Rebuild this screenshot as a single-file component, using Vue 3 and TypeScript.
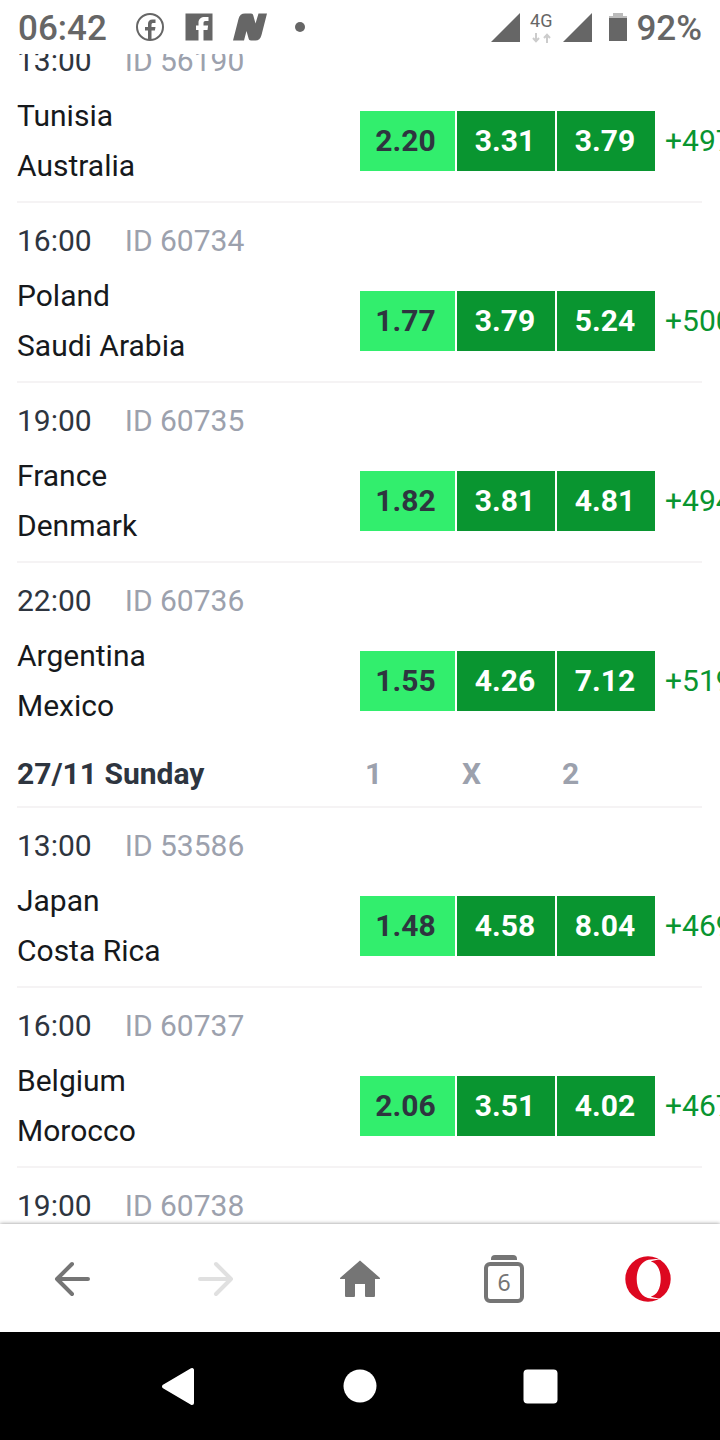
<script setup lang="ts">
import { onMounted, ref } from 'vue'

interface Match {
  time: string
  id: string
  teams?: string[]
  odds?: string[]
  more?: string
}

interface Day {
  title?: string
  matches: Match[]
}

const outcomes = ['1', 'X', '2']

const days: Day[] = [
  {
    matches: [
      { time: '13:00', id: '56190', teams: ['Tunisia', 'Australia'], odds: ['2.20', '3.31', '3.79'], more: '+497' },
      { time: '16:00', id: '60734', teams: ['Poland', 'Saudi Arabia'], odds: ['1.77', '3.79', '5.24'], more: '+500' },
      { time: '19:00', id: '60735', teams: ['France', 'Denmark'], odds: ['1.82', '3.81', '4.81'], more: '+494' },
      { time: '22:00', id: '60736', teams: ['Argentina', 'Mexico'], odds: ['1.55', '4.26', '7.12'], more: '+519' },
    ],
  },
  {
    title: '27/11 Sunday',
    matches: [
      { time: '13:00', id: '53586', teams: ['Japan', 'Costa Rica'], odds: ['1.48', '4.58', '8.04'], more: '+469' },
      { time: '16:00', id: '60737', teams: ['Belgium', 'Morocco'], odds: ['2.06', '3.51', '4.02'], more: '+467' },
      { time: '19:00', id: '60738' },
    ],
  },
]

const list = ref<HTMLElement | null>(null)

onMounted(() => {
  if (list.value) list.value.scrollTop = 31
})
</script>

<template>
  <div class="screen">
    <header class="status">
      <span class="clock">06:42</span>
      <div class="notices">
        <svg width="30" height="30" viewBox="0 0 30 30" aria-hidden="true">
          <circle cx="15" cy="15" r="13" fill="none" stroke="#666" stroke-width="2" />
          <path fill="#666" d="M13 28V18.500H10V15h3v-3C13 9 14.500 7.500 17.500 7.500H20.500v3.500h-2.200c-1.300 0-1.800.6-1.800 1.800V15H20.500l-.6 3.500h-3.400V28z" />
        </svg>
        <svg width="28" height="28" viewBox="0 0 28 28" aria-hidden="true">
          <path fill="#666" fill-rule="evenodd" d="M.5.5h27v27H18.500V17H22.500l.6-4.500H18.500V10c0-1.300.6-2 2-2H23.500V4H20C16 4 13.500 6 13.500 9.500v3H11V17h2.500v10.500H.5z" />
        </svg>
        <svg width="34" height="28" viewBox="0 0 34 28" aria-hidden="true">
          <path fill="#666" d="M0 27.500 5.500 6C6.500 2.300 8.500.5 12 .5h6c1.500 0 2 .8 2.300 2l2.200 8L25.500.5H34L28.500 22c-1 3.700-3 5.500-6 5.500h-4.500c-1.500 0-2.100-.8-2.400-2L13.500 18l-2.500 9.500z" />
        </svg>
        <i class="dot"></i>
      </div>
      <div class="signals">
        <svg width="29" height="29" viewBox="0 0 29 29" aria-hidden="true"><path fill="#666" d="M29 0v29H0z" /></svg>
        <div class="network">
          <span>4G</span>
          <svg width="20" height="10" viewBox="0 0 20 10" aria-hidden="true">
            <path fill="none" stroke="#ccc" stroke-width="2" d="M5 0v8M2 5l3 3.200L8 5M16 10V2M13 5l3-3.200L19 5" />
          </svg>
        </div>
        <svg width="29" height="29" viewBox="0 0 29 29" aria-hidden="true"><path fill="#666" d="M29 0v29H0z" /></svg>
        <svg class="battery" width="18" height="29" viewBox="0 0 18 29" aria-hidden="true">
          <path fill="#bbb" d="M4 0h10v3h4v3H0V3h4z" />
          <path fill="#666" d="M0 5h18v23H0z" />
        </svg>
        <span class="percent">92%</span>
      </div>
    </header>

    <main ref="list" class="list">
      <section v-for="(day, d) in days" :key="d">
        <h2 v-if="day.title" class="day">
          <span>{{ day.title }}</span>
          <span class="outcomes"><span v-for="o in outcomes" :key="o">{{ o }}</span></span>
        </h2>
        <article v-for="m in day.matches" :key="m.id" class="match">
          <div class="meta"><time>{{ m.time }}</time><span class="id">ID {{ m.id }}</span></div>
          <div v-if="m.teams" class="body">
            <div class="teams"><div v-for="t in m.teams" :key="t">{{ t }}</div></div>
            <div class="odds">
              <button v-for="(o, i) in m.odds" :key="i" type="button">{{ o }}</button>
              <a class="more" href="#">{{ m.more }}</a>
            </div>
          </div>
        </article>
      </section>
    </main>

    <nav class="toolbar" aria-label="Browser">
      <button type="button" aria-label="Back">
        <svg width="48" height="48" viewBox="0 0 48 48"><path class="arrow" stroke="#757575" d="M40 24H9M24 9 9 24l15 15" /></svg>
      </button>
      <button type="button" aria-label="Forward" disabled>
        <svg width="48" height="48" viewBox="0 0 48 48"><path class="arrow" stroke="#e0e0e0" d="M8 24h31M24 9l15 15-15 15" /></svg>
      </button>
      <button type="button" aria-label="Home">
        <svg width="48" height="48" viewBox="0 0 48 48"><path fill="#757575" d="M24 5.500 43.500 22.500c.9.900.6 1.500-.5 1.500H39v16.500c0 1-.5 1.500-1.500 1.500h-7c-1 0-1.500-.5-1.500-1.500V29H19v11.500c0 1-.5 1.500-1.500 1.500h-7C9.500 42 9 41.500 9 40.500V24H5c-1.100 0-1.400-.6-.5-1.500z" /></svg>
      </button>
      <button type="button" class="tabs" aria-label="Tabs">
        <i class="tab-lid"></i>
        <span class="tab-count">6</span>
      </button>
      <button type="button" aria-label="Opera menu">
        <svg width="48" height="48" viewBox="0 0 48 48">
          <circle cx="24" cy="24" r="22.700" fill="#dd0820" />
          <path fill="#fff" d="M38 4.800C34.500 3.800 30.500 3.800 27 4.500 18 5 12.700 13.500 12.700 24S18 43 27 43.500c3.500.7 7.500.7 11-.3-4 .2-8-.2-11.300-1.700C33 40.500 36.700 33 36.700 24S33 7.500 26.700 6.500C30 5 34 4.600 38 4.800z" />
        </svg>
      </button>
    </nav>

    <nav class="system" aria-label="System">
      <button type="button" aria-label="System back">
        <svg width="48" height="48" viewBox="0 0 48 48"><path fill="#fff" stroke="#fff" stroke-width="4" stroke-linejoin="round" d="M36 8v33L8 24.500z" /></svg>
      </button>
      <button type="button" aria-label="System home">
        <svg width="48" height="48" viewBox="0 0 48 48"><circle cx="24" cy="24" r="16.500" fill="#fff" /></svg>
      </button>
      <button type="button" aria-label="Recent apps">
        <svg width="48" height="48" viewBox="0 0 48 48"><rect x="7.500" y="7.500" width="34" height="34" rx="4" fill="#fff" /></svg>
      </button>
    </nav>
  </div>
</template>

<style>
body {
  margin: 0;
}
</style>

<style scoped>
.screen {
  display: flex;
  flex-direction: column;
  height: 100vh;
  overflow: hidden;
  background: #fff;
  font-family: Roboto, "Liberation Sans", sans-serif;
  font-size: 30px;
  color: #16191c;
}

.screen svg {
  display: block;
  flex: none;
}

button {
  padding: 0;
  border: 0;
  background: none;
  font: inherit;
  color: inherit;
}

.status {
  display: flex;
  flex: none;
  align-items: center;
  height: 54px;
  padding: 0 18px;
  line-height: 36px;
  color: #666;
}

.clock,
.percent {
  padding-top: 4px;
  font-size: 35px;
  font-weight: 500;
}

.notices {
  display: flex;
  align-items: center;
  gap: 20px;
  margin-left: 28px;
}

.dot {
  width: 10px;
  height: 10px;
  margin-left: 8px;
  border-radius: 50%;
  background: #666;
}

.signals {
  display: flex;
  align-items: center;
  margin-left: auto;
}

.network {
  display: flex;
  flex-direction: column;
  align-items: center;
  gap: 4px;
  margin: 2px 11px 0 10px;
  font-size: 18px;
  line-height: 16px;
}

.battery {
  margin: 0 9px 0 17px;
}

.list {
  flex: 1;
  min-height: 0;
  overflow-x: hidden;
  overflow-y: auto;
  padding: 0 18px 0 17px;
  scrollbar-width: none;
}

.match {
  box-sizing: border-box;
  min-height: 178px;
  padding: 13px 0 10px;
  border-bottom: 2px solid #f5f3f4;
  line-height: 50px;
}

.match:last-child {
  border-bottom: 0;
}

.meta {
  display: flex;
  gap: 33px;
  color: #2e353f;
}

.id {
  color: #9ca1ad;
}

.body {
  display: grid;
  grid-template-columns: 1fr 342px;
  align-items: center;
  margin-top: 5px;
}

.odds {
  display: flex;
  gap: 2px;
  line-height: 60px;
  white-space: nowrap;
}

.odds button {
  flex: none;
  width: 98px;
  height: 60px;
  padding-right: 2px;
  background: #099530;
  font-weight: 700;
  color: #fff;
}

.odds button:first-child {
  width: 95px;
  padding-right: 4px;
  background: #32ee6d;
  color: #2e353f;
}

.more {
  margin-left: 8px;
  color: #099530;
  text-decoration: none;
}

.day {
  display: grid;
  grid-template-columns: 1fr 342px;
  margin: 0;
  border-bottom: 2px solid #f5f3f4;
  font-size: 30px;
  font-weight: 700;
  line-height: 65px;
  color: #2e353f;
}

.outcomes {
  display: grid;
  grid-template-columns: 97px 100px 100px;
  padding-left: 5px;
  color: #9ca1ad;
}

.toolbar {
  position: relative;
  box-sizing: border-box;
  display: grid;
  flex: none;
  grid-template-columns: repeat(5, 1fr);
  align-items: center;
  justify-items: center;
  height: 108px;
  padding-top: 2px;
  background: #fff;
  box-shadow: 0 0 4px rgba(0, 0, 0, 0.45);
}

.arrow {
  fill: none;
  stroke-width: 4;
  stroke-linecap: round;
  stroke-linejoin: round;
}

.tabs {
  display: flex;
  flex-direction: column;
  align-items: center;
  gap: 2px;
}

.tab-lid {
  width: 26px;
  height: 5px;
  border-radius: 4px 4px 0 0;
  background: #757575;
}

.tab-count {
  box-sizing: border-box;
  width: 40px;
  height: 41px;
  border: 4px solid #757575;
  border-radius: 6px;
  font-family: "Noto Sans", sans-serif;
  font-size: 23px;
  line-height: 33px;
  color: #757575;
}

.system {
  display: grid;
  flex: none;
  grid-template-columns: repeat(3, 25%);
  align-items: center;
  justify-content: center;
  justify-items: center;
  height: 108px;
  background: #000;
}
</style>
